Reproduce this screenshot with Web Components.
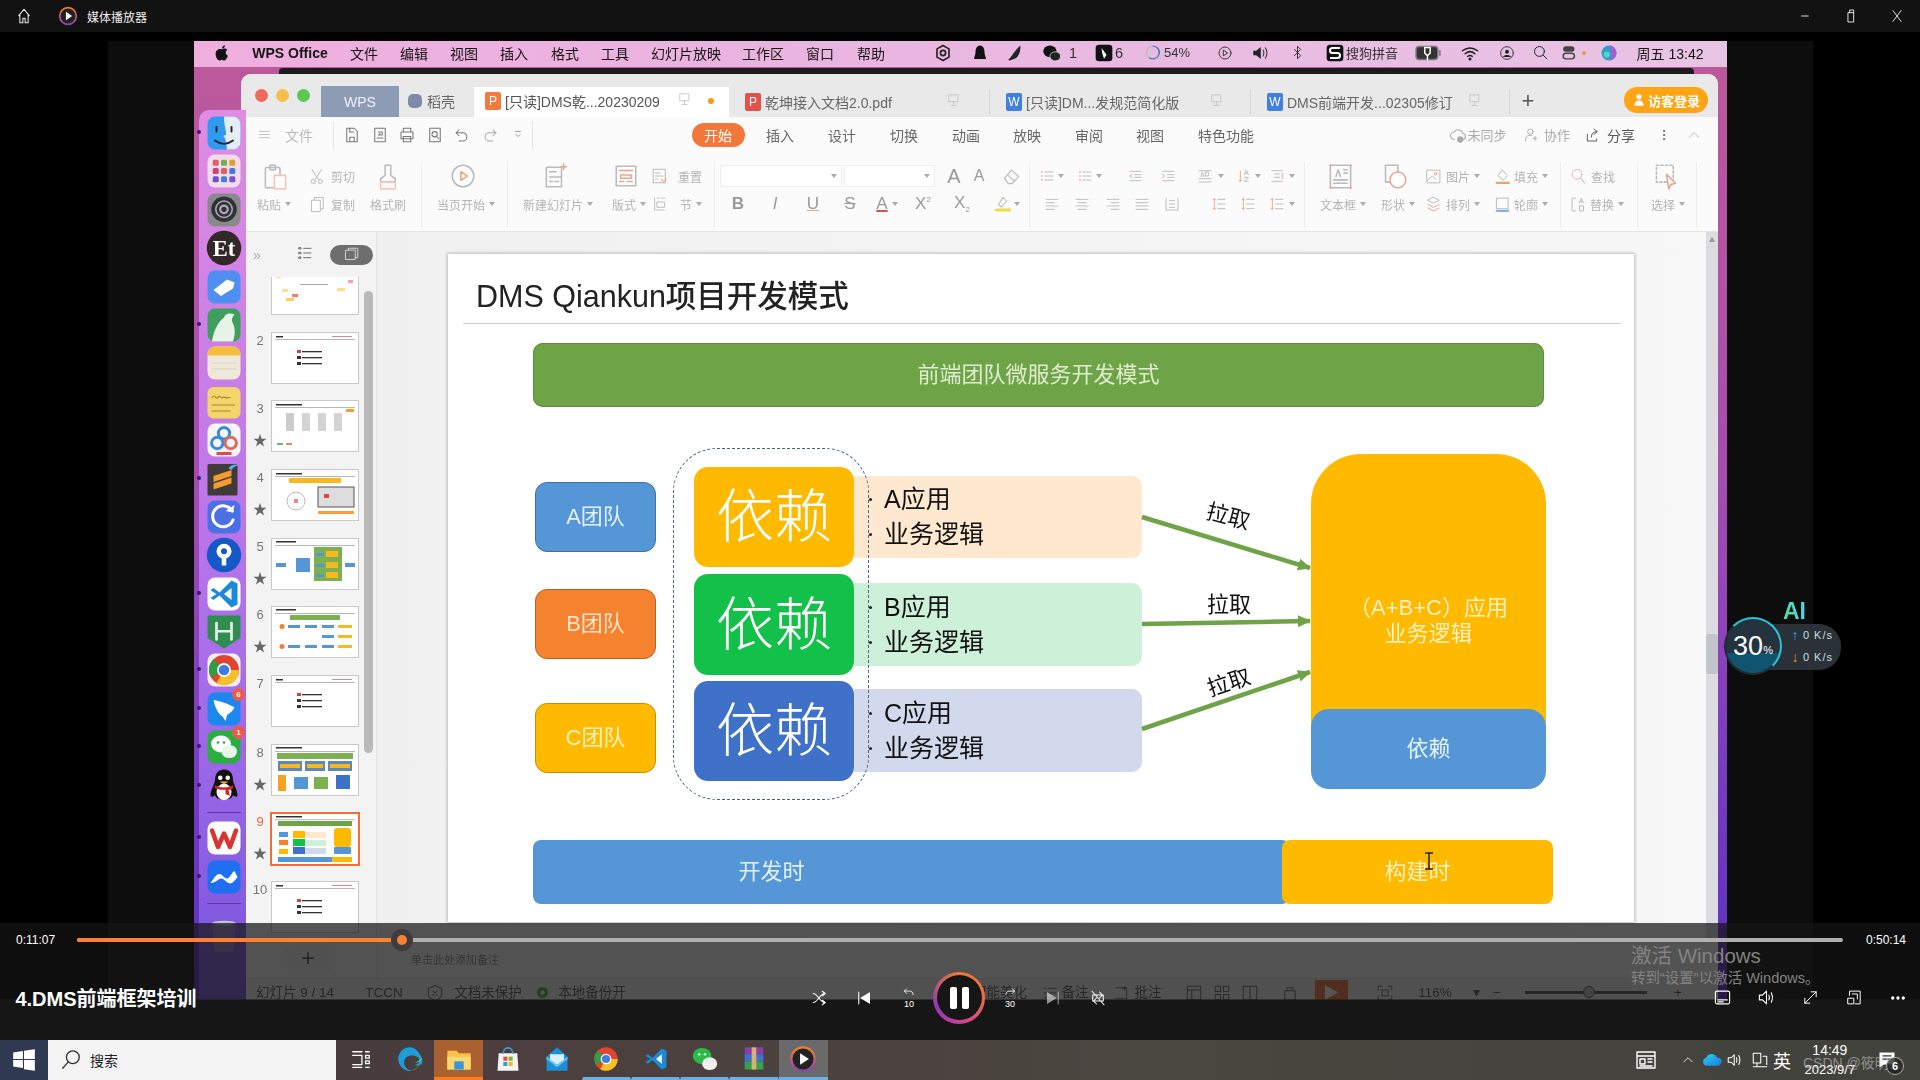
<!DOCTYPE html>
<html lang="zh">
<head>
<meta charset="utf-8">
<title>媒体播放器</title>
<style>
  html, body { margin: 0; background: #000; }
  body { font-family: "Liberation Sans", "Noto Sans CJK SC", sans-serif; }
</style>
</head>
<body>
<media-player>
  <player-titlebar slot="title"></player-titlebar>
  <mac-desktop slot="video"></mac-desktop>
  <speed-widget slot="float"></speed-widget>
  <player-controls slot="controls"></player-controls>
  <win-taskbar slot="taskbar"></win-taskbar>
</media-player>

<script>
const CHROME = '<circle cx="12" cy="12" r="10" fill="#e0452f" stroke="none"/><path d="M12 12 3.400 17A10 10 0 0 1 5 4.800z" fill="#2f9e44" stroke="none"/><path d="M12 12h10a10 10 0 0 1-15 8.700z" fill="#f6c026" stroke="none"/><circle cx="12" cy="12" r="4.600" fill="#fff" stroke="none"/><circle cx="12" cy="12" r="3.500" fill="#3b7de0" stroke="none"/>';
const VSC = '<path d="M17 3 9 11 5 8 3 9.500 7 12l-4 2.500L5 16l4-3 8 8 4-2V5z" fill="#1b8ad8" stroke="none"/><path d="M17 8v8l-5-4z" fill="#fff" stroke="none"/>';
const BUBBLES = '<ellipse cx="10" cy="10" rx="6.600" ry="5.600" fill="#fff" stroke="none"/><ellipse cx="15.500" cy="15" rx="5.200" ry="4.400" fill="#e8f5e8" stroke="none"/><circle cx="8" cy="9" r=".9" fill="#2aae43" stroke="none"/><circle cx="12" cy="9" r=".9" fill="#2aae43" stroke="none"/>';

const ICONS = {
  home: '<path d="M5 11.500 12 3l7 8.500M6.500 10v11h4v-6h3v6h4V10"/>',
  logo: '<defs><linearGradient id="rg" x1="0" y1="0" x2="0" y2="1"><stop offset="0" stop-color="#f08030"/><stop offset="1" stop-color="#9040b8"/></linearGradient></defs><circle cx="12" cy="12" r="10" fill="#222" stroke="url(#rg)" stroke-width="2"/><path d="M9.500 7 17 12l-7.500 5z" fill="#fff" stroke="none"/>',
  min: '<path d="M7 12h10"/>',
  restore: '<path d="M8 7h8v14H8zM10 7V3h6v4"/>',
  close: '<path d="m6 4 12 16M18 4 6 20"/>',
  apple: '<path d="M12 7c2-1.500 5-1.500 7 1-3 2-2.500 6 .8 7.500-1 3-3 6.500-5 6.500-1.500 0-2-1-3-1s-1.500 1-3 1C6 22 3.500 17 3.500 13 3.500 8 8 5.500 12 7zM12 6c0-2.500 2-4.500 4-4.500 0 2.500-2 4.500-4 4.500z" fill="#111" stroke="none"/>',
  gear: '<path d="M12 2 4 6.500v11L12 22l8-4.500v-11z" stroke-width="2.200"/><circle cx="12" cy="12" r="3.500" stroke-width="2.200"/>',
  ghost: '<path d="M12 2c4 0 6 4 6 9 0 4 2 6 2 9H4c0-3 2-5 2-9 0-5 2-9 6-9z" fill="#111" stroke="none"/>',
  leaf: '<path d="M19 2c1 8-2 14-6 17l-8 3-2-1c4-3 6-9 16-19z" fill="#222" stroke="none"/>',
  wx: '<ellipse cx="9.500" cy="10" rx="8" ry="7" fill="#111" stroke="none"/><ellipse cx="16" cy="16" rx="6.500" ry="5.500" fill="#222" stroke="#eee" stroke-width=".8"/>',
  notion: '<rect x="2" y="2" width="20" height="20" rx="4" fill="#111" stroke="none"/><path d="M9 6l6 8-3 5-2-6z" fill="#fff" stroke="none"/>',
  ring: '<path d="M12 3a9 9 0 1 1-5 16" stroke="#4a7fb0" stroke-width="2"/><path d="M7 19A9 9 0 0 1 12 3" stroke="#bbb" stroke-width="2"/>',
  playc: '<circle cx="12" cy="12" r="9"/><path d="m10 8 6 4-6 4z"/>',
  spk: '<path d="M3 9h4l6-5v16l-6-5H3z" fill="#222" stroke="none"/><path d="M16 8c1.500 2 1.500 6 0 8M19 5c3 4 3 10 0 14"/>',
  bt: '<path d="m7 7 10 10-5 5V2l5 5L7 17"/>',
  sogou: '<rect x="2" y="2" width="20" height="20" rx="4" fill="#111" stroke="none"/><path d="M17 6H9a3 3 0 0 0 0 6h6a3 3 0 0 1 0 6H7" stroke="#fff" stroke-width="2.500"/>',
  batt: '<rect x="1" y="6" width="20" height="12" rx="3" fill="#333" stroke="#777"/><path d="M9 7h5v5l-2 2h-1l-2-2zM11.500 14v4" stroke="#fff"/><path d="M23 10v4"/>',
  wifi: '<path d="M2 9c6-5 14-5 20 0M5.500 13c4-3.500 9-3.500 13 0M9 16.500c2-1.500 4-1.500 6 0" stroke-width="2"/><circle cx="12" cy="20" r="1.300" fill="#111"/>',
  user: '<circle cx="12" cy="12" r="9.500"/><circle cx="12" cy="10" r="3" fill="#222" stroke="none"/><path d="M6 18c2-4 10-4 12 0" fill="#222" stroke="none"/>',
  guest: '<circle cx="12" cy="6.500" r="4.500" fill="#fff" stroke="none"/><path d="M4 22c0-12 16-12 16 0z" fill="#fff" stroke="none"/>',
  search: '<circle cx="10.500" cy="10.500" r="7"/><path d="m16 16 5 5"/>',
  ctrl: '<rect x="3" y="3" width="16" height="8" rx="4" fill="#444" stroke="none"/><rect x="3" y="13" width="16" height="8" rx="4" fill="none" stroke="#444" stroke-width="2"/>',
  siri: '<circle cx="12" cy="12" r="10" fill="#2f9fc8" stroke="none"/><path d="M12 2a10 10 0 0 1 0 20c4-3 4-14 0-20z" fill="#a060d0" stroke="none"/><circle cx="9" cy="14" r="4" fill="#50d8c8" stroke="none"/>',

  finder: '<rect x="1" y="1" width="22" height="22" rx="5" fill="#2f9bf0" stroke="none"/><path d="M12 1h6a5 5 0 0 1 5 5v12a5 5 0 0 1-5 5h-4c-.5-5-1-8-2.500-9 1-.5 2-.5 2-1.500C13 9 12 6 12 1z" fill="#e4ecf4" stroke="none"/><path d="M7 8v3M17 8v3M6 17c4 3 8 3 12 0" stroke="#223" stroke-width="1.300" fill="none"/>',
  launch: '<rect x="1" y="1" width="22" height="22" rx="5" fill="#efdcec" stroke="none"/><g fill="#e06060" stroke="none"><rect x="4.500" y="4.500" width="4" height="4" rx="1"/><rect x="15.500" y="4.500" width="4" height="4" rx="1" fill="#e0a030"/><rect x="10" y="4.500" width="4" height="4" rx="1" fill="#70b050"/><rect x="4.500" y="10" width="4" height="4" rx="1" fill="#d04080"/><rect x="10" y="10" width="4" height="4" rx="1"/><rect x="15.500" y="10" width="4" height="4" rx="1" fill="#4080d8"/><rect x="4.500" y="15.500" width="4" height="4" rx="1" fill="#7050c8"/><rect x="10" y="15.500" width="4" height="4" rx="1" fill="#4080d8"/><rect x="15.500" y="15.500" width="4" height="4" rx="1" fill="#8050d0"/></g>',
  settings: '<rect x="1" y="1" width="22" height="22" rx="5" fill="#8a8a8a" stroke="none"/><circle cx="12" cy="11.500" r="8.500" fill="#2f3336" stroke="none"/><circle cx="12" cy="11.500" r="5.500" fill="none" stroke="#aab" stroke-width="1"/><circle cx="12" cy="11.500" r="2.500" fill="none" stroke="#aab" stroke-width="1.500"/>',
  et: '<circle cx="12" cy="12" r="11.500" fill="#32282a" stroke="none"/><text x="12" y="17.500" font-size="15" font-weight="700" text-anchor="middle" fill="#fff" stroke="none" font-family="Liberation Serif">Et</text>',
  pencil: '<rect x="1" y="1" width="22" height="22" rx="5" fill="#4f8ff2" stroke="none"/><path d="m5 14 9-7 5 2-1 4-8 5z" fill="#fff" stroke="none"/>',
  evernote: '<rect x="1" y="1" width="22" height="22" rx="5" fill="#3e9e5c" stroke="none"/><path d="M4 23c1-8 5-14 8-16 1-3 4-3 7-2-2 2-2 4-1 6 2 4 1 9 0 12z" fill="#e7f3e6" stroke="none"/>',
  notes: '<rect x="1" y="1" width="22" height="22" rx="5" fill="#eee8d8" stroke="none"/><path d="M1 7V6a5 5 0 0 1 5-5h12a5 5 0 0 1 5 5v1z" fill="#f5bd3c" stroke="none"/><path d="M4 12h16M4 16h16" stroke="#d8d2c2" stroke-width=".7"/>',
  sticky: '<rect x="1" y="2" width="22" height="21" rx="4" fill="#f3d56c" stroke="none"/><path d="M4 9c2-3 3 2 4 0s2 1 3 0 2 1 5 0M4 14h15M4 18h12" stroke="#a58a30" stroke-width=".8" fill="none"/>',
  baidu: '<rect x="1" y="1" width="22" height="22" rx="5" fill="#f5f5fa" stroke="none"/><circle cx="12" cy="7.500" r="3.800" fill="none" stroke="#3a8ae0" stroke-width="2"/><circle cx="7.500" cy="14" r="3.800" fill="none" stroke="#3a8ae0" stroke-width="2"/><circle cx="16.500" cy="14" r="3.800" fill="none" stroke="#e06a5a" stroke-width="2"/><rect x="7" y="20" width="10" height="2" fill="#e04a4a" stroke="none"/>',
  sublime: '<rect x="1" y="2" width="20" height="21" rx="1" fill="#3e3b38" stroke="none"/><path d="M5 10 17 6v4L5 14zM5 15l12-4v4L5 19z" fill="#f39c2f" stroke="none"/><path d="M15 5c2-3 5-3 7-2-2 0-4 1-5 3z" fill="#5ab0f0" stroke="none"/>',
  qsync: '<rect x="1" y="1" width="22" height="22" rx="5" fill="#4a70e4" stroke="none"/><path d="M18 14a7 7 0 1 1-.5-6" fill="none" stroke="#fff" stroke-width="2"/><path d="m19 4-1 5-5-1z" fill="#fff" stroke="none"/>',
  keyhole: '<circle cx="12" cy="12" r="11.500" fill="#1558c6" stroke="none"/><circle cx="12" cy="9.500" r="5" fill="#fff" stroke="none"/><circle cx="12" cy="9.500" r="2" fill="#1558c6" stroke="none"/><rect x="10.500" y="13" width="3" height="6" fill="#fff" stroke="none"/>',
  vscodeDock: '<rect x="1" y="1" width="22" height="22" rx="5" fill="#fff" stroke="none"/>' + VSC,
  hbuilder: '<path d="M1 1h22v15l-11 7-11-7z" fill="#2f8d52" stroke="none"/><path d="M7 6v11M17 6v11M7 11.500h10" stroke="#e8f4e8" stroke-width="1.800"/>',
  chromeDock: '<rect x="1" y="1" width="22" height="22" rx="5" fill="#f2eef2" stroke="none"/>' + CHROME,
  ding: '<rect x="1" y="1" width="22" height="22" rx="5" fill="#1e87ee" stroke="none"/><path d="M5 6c5 1 9 2 14 5-1 2-3 4-5 5l-1 4-2-3c-3-2-5-6-6-11z" fill="#fff" stroke="none"/>',
  wechatDock: '<rect x="1" y="1" width="22" height="22" rx="5" fill="#2aae43" stroke="none"/>' + BUBBLES,
  qq: '<path d="M12 1c4 0 6 3 6 7 0 2 3 7 3 10 0 2-2 1-3 0-.5 2-2 3-6 3s-5.500-1-6-3c-1 1-3 2-3 0 0-3 3-8 3-10 0-4 2-7 6-7z" fill="#111" stroke="none"/><ellipse cx="12" cy="16" rx="5" ry="5.500" fill="#fff" stroke="none"/><circle cx="9.500" cy="6.500" r="1.500" fill="#fff" stroke="none"/><circle cx="14.500" cy="6.500" r="1.500" fill="#fff" stroke="none"/><path d="M9 9h6l-3 2z" fill="#f2b01e" stroke="none"/><path d="M6 11.500c4 2 8 2 12 0v2c-1 1-2 1-3 1l1 4-3-1v-3c-3 0-6 0-7-1z" fill="#d8231f" stroke="none"/>',
  wpsDock: '<rect x="1" y="1" width="22" height="22" rx="5" fill="#fff" stroke="none"/><path d="m4 7 4 11 4-9 4 9 4-11" fill="none" stroke="#d9342f" stroke-width="3" stroke-linejoin="round"/>',
  lark: '<rect x="1" y="1" width="22" height="22" rx="5" fill="#1f6ff0" stroke="none"/><path d="M3 16c3-4 4-6 6-6s3 3 5 3 3-4 5-5l2 4c-2 3-4 5-6 4s-3-3-5-3-3 3-7 3z" fill="#fff" stroke="none"/>',
  trash: '<path d="M4 4h16l-2 19H6z" fill="#9c94b8" opacity=".7" stroke="none"/><ellipse cx="12" cy="4" rx="8" ry="1.500" fill="#c8c2dc" stroke="none"/>',

  menu3: '<path d="M4 7h16M4 12h16M4 17h16"/>',
  save: '<path d="M5 3h10l4 4v14H5zM9 21v-6h6v6M9 3v5h5"/>',
  saveas: '<path d="M5 3h14v18H5zM10 8h5v4h-5l2-2M8 16h8"/>',
  print: '<path d="M7 8V3h10v5M4 8h16v9H4zM7 14h10v7H7z"/>',
  preview: '<path d="M5 3h14v18H5z"/><circle cx="11.500" cy="11" r="3.500"/><path d="m14 14 3 3"/>',
  undo: '<path d="M8 5 4 9l4 4M4 9h9a5 5 0 0 1 0 11H8"/>',
  redo: '<path d="m16 5 4 4-4 4M20 9h-9a5 5 0 0 0 0 11h5"/>',
  qa: '<path d="M7 5h10M8 11l4 4 4-4"/>',
  sync: '<path d="M7 18a5 5 0 0 1 0-10 6 6 0 0 1 11 2 4 4 0 0 1 0 8"/><circle cx="15" cy="18" r="3.500" fill="#aaa"/>',
  collab: '<circle cx="11" cy="7" r="4"/><path d="M4 21v-3a6 6 0 0 1 9-5M18 14v6M15 17h6"/>',
  share: '<path d="M5 11v10h14v-3M11 15c0-5 3-8 8-8M15 3l5 4-5 4"/>',
  dots: '<circle cx="12" cy="5" r="1.200" fill="#888"/><circle cx="12" cy="12" r="1.200" fill="#888"/><circle cx="12" cy="19" r="1.200" fill="#888"/>',
  up: '<path d="m4 16 8-8 8 8"/>',
  mon: '<path d="M5 3h14v11H5zM12 14v5M8 20h8"/>',
  paste: '<rect x="3" y="4" width="13" height="18" rx="1"/><rect x="7" y="2" width="5" height="4"/><rect x="11" y="11" width="10" height="12" stroke="#f3c7b4" fill="#fff"/>',
  cut: '<circle cx="6" cy="19" r="3"/><circle cx="16" cy="19" r="3"/><path d="M8 17 18 2M14 17 4 2"/>',
  copy: '<rect x="8" y="2" width="12" height="16"/><rect x="4" y="6" width="12" height="16" fill="#fff"/>',
  brush: '<path d="M9 2h5v9l4 3v3H5v-3l4-3z"/><path d="M5 17h13v6H5z" stroke="#f3c7b4"/>',
  newslide: '<path d="M4 4h14v18H4zM7 8h6M7 13h10M7 17h3M12 17h3"/><path d="M20 1v5M17.500 3.500h5" stroke="#e8a690"/>',
  layout: '<rect x="3" y="3" width="18" height="18"/><path d="M6 7h12M7 11h10v3H7z" stroke="#e8a690"/><path d="M6 17h4M13 17h5"/>',
  reset: '<rect x="3" y="3" width="16" height="18"/><path d="M6 8h6M6 12h10M6 16h3"/><path d="M14 16a3 3 0 1 0 6 0" stroke="#e8a690"/>',
  section: '<path d="M4 3v18h14M8 3h3M14 3h5M8 9h11v8H8z"/>',
  eraser: '<path d="m3 14 9-10 9 8-8 9H8z"/><path d="m7 10 9 8"/>',
  hl: '<path d="m12 3 5 5-7 8-4-3z"/><path d="M3 20h18" stroke="#e8de50" stroke-width="4"/>',
  bullets: '<path d="M9 6h12M9 12h12M9 18h12"/><path d="M4 6h1M4 12h1M4 18h1" stroke="#e8a690" stroke-width="2"/>',
  indL: '<path d="M4 5h17M11 10h10M11 14h10M4 19h17"/><path d="m8 9-4 3 4 3" stroke="#e8a690"/>',
  indR: '<path d="M4 5h17M11 10h10M11 14h10M4 19h17"/><path d="m3 9 4 3-4 3" stroke="#e8a690"/>',
  ab: '<path d="M3 4h18M3 21h18M3 16h18"/><path d="M6 13l2-7 2 7M13 6h4v6h-4z"/>',
  sort: '<path d="M5 4v16l-2-2M5 20l2-2" stroke="#e8a690"/><path d="m11 10 3-7 3 7M12 8h4M11 14h6l-6 6h6"/>',
  space: '<path d="M4 4h16M4 20h16M8 9h8M8 14h8"/><path d="M20 8v8" stroke="#e8a690"/>',
  alignL: '<path d="M3 5h18M3 10h12M3 15h18M3 20h12"/>',
  alignC: '<path d="M3 5h18M6 10h12M3 15h18M6 20h12"/>',
  alignR: '<path d="M3 5h18M9 10h12M3 15h18M9 20h12"/>',
  alignJ: '<path d="M3 5h18M3 10h18M3 15h18M3 20h18"/>',
  distr: '<path d="M3 3v18h18V3M8 7h8M8 12h8M8 17h8"/>',
  lineUp: '<path d="M10 5h11M10 12h11M10 19h11"/><path d="M5 4v16M3 6l2-2 2 2M3 18l2 2 2-2" stroke="#e8a690"/>',
  textbox: '<rect x="3" y="2" width="18" height="20"/><path d="M8 12l2-6 2 6M6 15h12M6 18h12M15 6h3M15 9h3"/><g stroke="#e8a690" stroke-width="2"><path d="M3 2h.1M21 2h.1M3 22h.1M21 22h.1"/></g>',
  shape: '<path d="M4 2h11v15H4z"/><circle cx="15" cy="15" r="7" stroke="#e8a690" fill="#fff"/>',
  pic: '<rect x="3" y="3" width="18" height="18"/><path d="m3 18 7-7 5 5"/><circle cx="15" cy="8" r="2" stroke="#e8a690"/>',
  fill: '<path d="m12 3 7 8-6 6-7-6z"/><path d="M4 21h17" stroke="#f0a060" stroke-width="3"/>',
  arrange: '<path d="m12 2 8 4-8 4-8-4z"/><path d="m4 12 8 4 8-4M4 17l8 4 8-4" stroke="#e8a690"/>',
  outline: '<rect x="4" y="3" width="16" height="15"/><path d="M4 21h16" stroke="#8ab0e0" stroke-width="3"/>',
  find: '<circle cx="10" cy="9" r="7" stroke="#e8b8a8"/><path d="m15 14 6 8"/>',
  replace: '<path d="M8 3H3v18h5M13 10l3-7 3 7M14 8h4M14 14h5v7h-5z"/>',
  selectA: '<rect x="3" y="2" width="15" height="15" stroke-dasharray="2 2"/><path d="m12 10 8 8-4 1-2 4z" stroke="#e8a690" fill="#fff"/>',
  playBig: '<circle cx="12" cy="12" r="10"/><path d="m10 8 6 4-6 4z" stroke="#e8a690"/>',
  listview: '<path d="M10 5h11M10 12h11M10 19h11"/><rect x="3" y="4" width="3" height="2"/><rect x="3" y="11" width="3" height="2"/><rect x="3" y="18" width="3" height="2"/>',
  slideview: '<rect x="3" y="5" width="15" height="15" fill="#6e6e6e"/><path d="M7 5V2h15v15h-4"/>',
  shield: '<path d="M12 2 21 6v8c0 4-4 6-9 8-5-2-9-4-9-8V6z"/><path d="m9 9 6 6M15 9l-6 6"/>',
  backup: '<circle cx="12" cy="12" r="9" fill="#57a64f" stroke="none"/><circle cx="12" cy="12" r="3.500" fill="#eef" stroke="none"/>',
  view1: '<path d="M3 3h18v18H3zM3 8h18M9 8v13"/>',
  view2: '<path d="M3 3h7v7H3zM14 3h7v7h-7zM3 14h7v7H3zM14 14h7v7h-7z"/>',
  view3: '<path d="M3 3h18v18H3zM12 3v18"/>',
  focus: '<path d="M3 8V3h5M21 8V3h-5M3 16v5h5M21 16v5h-5"/><rect x="8" y="8" width="8" height="8"/>',
  lock: '<rect x="5" y="9" width="14" height="12"/><path d="M8 9V5h8v4"/>',
  note: '<path d="M3 5h4M3 12h4M3 19h4M10 5h11M10 12h11M10 19h11"/>',
  comment: '<path d="M3 4h16v16H3M16 2v6M13 5h6"/>',

  shuffle: '<path d="M3 6c6 0 9 12 15 12M3 18c6 0 9-12 15-12M15 3l4 3-4 3M15 15l4 3-4 3"/>',
  prev: '<path d="M5 4v16"/><path d="M20 4v16L7 12z" fill="#fff" stroke="none"/>',
  next: '<path d="M19 4v16"/><path d="M4 4v16l13-8z" fill="#fff" stroke="none"/>',
  back: '<path d="M8 3 4 7l4 4M4 7h8c5 0 7 2 7 6"/>',
  fwd: '<path d="m16 3 4 4-4 4M20 7h-8c-5 0-7 2-7 6"/>',
  repeat: '<path d="M5 16V8h12M14 4l4 4-4 4M19 8v8H7M10 20l-4-4 4-4M4 3l16 18"/>',
  subtitle: '<rect x="3" y="4" width="18" height="16" rx="2"/><path d="M6 15h12M6 17.500h7"/>',
  volume: '<path d="M3 9h4l5-5v16l-5-5H3z"/><path d="M15 9c1 2 1 4 0 6M18 6c2 4 2 8 0 12"/>',
  full: '<path d="M4 20 20 4M13 4h7v7M11 20H4v-7"/>',
  pip: '<path d="M5 9V3h15v18H13M3 13h8v8H3zM9 7h7v7"/>',
  more: '<circle cx="5" cy="12" r="1.500" fill="#fff"/><circle cx="12" cy="12" r="1.500" fill="#fff"/><circle cx="19" cy="12" r="1.500" fill="#fff"/>',

  win: '<path d="m2 5 9-1.300V11H2zM12 3.500 22 2v9H12zM2 12h9v7.300L2 18zM12 12h10v10l-10-1.500z" fill="#fff" stroke="none"/>',
  tasksearch: '<circle cx="14" cy="9" r="7"/><path d="m9 14-6 7"/>',
  taskview: '<path d="M3 3h10M3 20h10M3 7h10v10H3M17 3h4M17 7h4v3h-4zM17 13h4v3h-4zM17 20h4"/>',
  edge: '<path d="M12 2a10 10 0 0 0-8 16c2 3 6 5 9 4-4-1-6-4-6-7 0-4 3-6 7-6s6 2 6 5c0 1-1 3-4 3 1 1 4 1 6-1 1-1 1-3 0-5-2-5-6-9-10-9z" fill="#1a9fd8" stroke="none"/><path d="M21 14c-1 4-5 8-9 8 3 0 7-1 9-8z" fill="#3fc060" stroke="none"/><path d="M16 15c3 .5 6-1 6-5-1 3-3 4-6 5z" fill="#50d070" stroke="none"/>',
  folder: '<path d="M2 5h8l2 2h10v14H2z" fill="#f8c24a" stroke="none"/><path d="M2 10h20v11H2z" fill="#fbd774" stroke="none"/><rect x="8" y="14" width="8" height="7" fill="#3a96d8" stroke="none"/>',
  store: '<path d="M4 7h16l1 15H3z" fill="#f4f4f4" stroke="none"/><path d="M8 7c0-6 8-6 8 0" stroke="#3a9fe0" fill="none"/><rect x="8" y="10" width="3.500" height="3.500" fill="#e8503a" stroke="none"/><rect x="12.500" y="10" width="3.500" height="3.500" fill="#7ab830" stroke="none"/><rect x="8" y="14.500" width="3.500" height="3.500" fill="#2a9fe8" stroke="none"/><rect x="12.500" y="14.500" width="3.500" height="3.500" fill="#f4b820" stroke="none"/>',
  mail: '<path d="M3 10 12 2l9 8v12H3z" fill="#1a8fd8" stroke="none"/><path d="M6 8h12v5l-6 4-6-4z" fill="#d8f0fc" stroke="none"/><path d="M3 10l9 7 9-7v2l-9 7-9-7z" fill="#6cc4f0" stroke="none"/>',
  chrome: CHROME,
  vscode: VSC,
  wechat: '<ellipse cx="9.500" cy="9.500" rx="8" ry="7" fill="#2db84a" stroke="none"/><ellipse cx="16" cy="16" rx="6.500" ry="5.500" fill="#efefef" stroke="none"/><circle cx="7" cy="8" r="1" fill="#fff" stroke="none"/><circle cx="12" cy="8" r="1" fill="#fff" stroke="none"/>',
  rar: '<rect x="4" y="2" width="16" height="6" fill="#8a3fa8" stroke="none"/><rect x="4" y="8" width="16" height="6" fill="#3f6fd0" stroke="none"/><rect x="4" y="14" width="16" height="7" fill="#3a9f4f" stroke="none"/><rect x="10" y="2" width="4" height="19" fill="#d8b070" stroke="none"/>',
  news: '<path d="M3 4h18v16H3zM3 8h18M6 11h5v5H6zM14 11h4M14 14h4M6 18h12"/>',
  caret: '<path d="m5 15 7-7 7 7"/>',
  cloud: '<defs><linearGradient id="cg" x1="0" y1="0" x2="1" y2="1"><stop offset="0" stop-color="#2ad0e8"/><stop offset="1" stop-color="#1a78e8"/></linearGradient></defs><path d="M6 19a5 5 0 0 1-1-9.800A7 7 0 0 1 18 9a5 5 0 0 1 1 10z" fill="url(#cg)" stroke="none"/>',
  speaker: '<path d="M3 9h4l4-4v14l-4-4H3z"/><path d="M14 9c1 2 1 4 0 6M17 6c2 4 2 8 0 12"/>',
  net: '<path d="M3 3h10v13H3zM8 16v5M3 21h10M16 7h5v11M13 21h8"/>',
  notify: '<path d="M3 3h18v14H9l-6 4z" fill="#fff" stroke="none"/><path d="M7 7h10M7 11h10" stroke="#333"/>'
};

class UiIcon extends HTMLElement {
  connectedCallback() {
    const s = this.getAttribute('size') || 16;
    const root = this.attachShadow({ mode: 'open' });
    root.innerHTML = `<style>:host{display:inline-flex;flex:none}svg{display:block}</style>
      <svg viewBox="0 0 24 24" width="${s}" height="${s}" fill="none" stroke="currentColor" stroke-width="1.4" stroke-linecap="round" stroke-linejoin="round">${ICONS[this.getAttribute('name')] || ''}</svg>`;
  }
}
customElements.define('ui-icon', UiIcon);

const ic = (name, size = 16, style = '') => `<ui-icon name="${name}" size="${size}" style="${style}"></ui-icon>`;
const caret = '<i class="car"></i>';

// row of fixed cells placed by centre x; still flex flow, margins come from the list
function row(start, items) {
  let x = start;
  return items.map(([cx, w, html]) => {
    const left = cx - w / 2;
    const m = left - x;
    x = left + w;
    return `<span class="c" style="width:${w}px;margin-left:${m}px">${html}</span>`;
  }).join('');
}
const ROW_CSS = `
  .row{display:flex;align-items:center;white-space:nowrap}
  .c{flex:none;display:flex;align-items:center;justify-content:center}
  .car{display:inline-block;border:3px solid transparent;border-top:4px solid #aaa;border-bottom:0;margin-left:4px}
`;

class MediaPlayer extends HTMLElement {
  constructor() {
    super();
    this.attachShadow({ mode: 'open' }).innerHTML = `
    <style>
      :host{display:grid;grid-template-rows:32px 1fr 40px;width:1920px;height:1080px;overflow:hidden;background:#000;color:#fff}
      .stage{position:relative;overflow:hidden;background:#000;padding:9px 108px 0;display:flex}
      .frame{flex:1;background:#0d0d0d;padding:0 86px;height:959px;box-sizing:border-box}
    </style>
    <slot name="title"></slot>
    <div class="stage">
      <div class="frame"><slot name="video"></slot></div>
      <slot name="float"></slot>
      <slot name="controls"></slot>
    </div>
    <slot name="taskbar"></slot>`;
  }
}

class PlayerTitlebar extends HTMLElement {
  constructor() {
    super();
    this.attachShadow({ mode: 'open' }).innerHTML = `
    <style>
      :host{display:flex;align-items:center;background:#121212;color:#eee;font-size:12px}
      ${ROW_CSS}
      .row{width:100%;height:100%}
    </style>
    <div class="row">${row(0, [
      [24, 18, ic('home', 18)],
      [68, 20, ic('logo', 20)],
      [117, 62, '媒体播放器'],
      [1805, 16, ic('min', 16)],
      [1851, 16, ic('restore', 16)],
      [1897, 16, ic('close', 16)]
    ])}</div>`;
  }
}

class MacDesktop extends HTMLElement {
  constructor() {
    super();
    this.attachShadow({ mode: 'open' }).innerHTML = `
    <style>
      :host{display:block;position:relative;height:959px;overflow:hidden;filter:blur(.45px);
        background:linear-gradient(180deg,#bd5a9a 0,#a64cb0 45%,#7a3cc0 75%,#5a2fc0 100%)}
      .win{padding:0 9px 0 47px}
      .back{height:6px;margin:1px 33px 0 85px;background:#1c1c1c;border-radius:4px 4px 0 0}
    </style>
    <mac-menubar></mac-menubar>
    <div class="back"></div>
    <div class="win"><wps-window></wps-window></div>
    <mac-dock></mac-dock>`;
  }
}

class MacMenubar extends HTMLElement {
  constructor() {
    super();
    const t = (cx, s, w) => [cx, w || s.length * 15, s];
    this.attachShadow({ mode: 'open' }).innerHTML = `
    <style>
      :host{display:block;height:26px;padding-bottom:3px;box-sizing:border-box;background:linear-gradient(90deg,#efaede 0,#eab4e0 40%,#e8c4e4 100%);color:#151515;font-size:14px}
      ${ROW_CSS}
      .row{height:100%}
      b{font-size:14px}
      small{font-size:13px;color:#333}
      .n{font-size:14.500px}
      .o{width:4px;height:4px;border-radius:50%;background:#e8a040}
    </style>
    <div class="row">${row(194, [
      [222, 18, ic('apple', 18)],
      [290, 78, '<b>WPS Office</b>'],
      t(364, '文件'), t(414, '编辑'), t(464, '视图'), t(514, '插入'), t(565, '格式'), t(615, '工具'),
      t(686, '幻灯片放映'), t(763, '工作区'), t(820, '窗口'), t(871, '帮助'),
      [943, 18, ic('gear', 18, 'color:#222')],
      [980, 18, ic('ghost', 18)],
      [1015, 18, ic('leaf', 18)],
      [1052, 20, ic('wx', 20)],
      [1073, 10, '<small class="n">1</small>'],
      [1104, 20, ic('notion', 20)],
      [1119, 10, '<small class="n">6</small>'],
      [1152, 17, ic('ring', 17)],
      [1177, 30, '<small>54%</small>'],
      [1225, 16, ic('playc', 16, 'color:#333')],
      [1260, 18, ic('spk', 18, 'color:#333')],
      [1297, 15, ic('bt', 15, 'color:#222')],
      [1335, 20, ic('sogou', 20)],
      [1372, 52, '<small>搜狗拼音</small>'],
      [1428, 26, ic('batt', 26, 'color:#777')],
      [1470, 18, ic('wifi', 18, 'color:#222')],
      [1507, 16, ic('user', 16, 'color:#333')],
      [1540, 17, ic('search', 17, 'color:#222')],
      [1569, 17, ic('ctrl', 17)],
      [1584, 4, '<i class="o"></i>'],
      [1609, 18, ic('siri', 18)],
      [1670, 80, '周五 13:42']
    ])}</div>`;
  }
}

class MacDock extends HTMLElement {
  constructor() {
    super();
    const names = [
      ['finder', 1], ['launch'], ['settings'], ['et'], ['pencil'], ['evernote', 1], ['notes'], ['sticky'],
      ['baidu'], ['sublime', 1], ['qsync'], ['keyhole'], ['vscodeDock', 1], ['hbuilder'], ['chromeDock', 1],
      ['ding', 1, '6'], ['wechatDock', 1, '1'], ['qq', 1], '-', ['wpsDock', 1], ['lark', 1], '-', ['trash']
    ];
    const cells = names.map(n => n === '-' ? '<hr>' :
      `<div class="it">${n[1] ? '<i class="dot"></i>' : ''}${ic(n[0], 36)}${n[2] ? `<b>${n[2]}</b>` : ''}</div>`).join('');
    this.attachShadow({ mode: 'open' }).innerHTML = `
    <style>
      :host{position:absolute;left:5px;top:69px;width:47px;height:900px;border-radius:10px 0 0 0;
        background:linear-gradient(180deg,#e08ce2 0,#c47be8 35%,#a56cea 65%,#7454dc 100%);
        display:flex;flex-direction:column;align-items:center;padding:5px 0 0 3px;box-sizing:border-box;gap:2.400px}
      .it{position:relative;height:36px;flex:none;display:flex}
      .dot{position:absolute;left:-9px;top:15px;width:4px;height:4px;border-radius:50%;background:#3a1a70}
      b{position:absolute;right:-3px;top:-3px;width:13px;height:13px;border-radius:50%;background:#ee5a4a;color:#fff;
        font:700 8px/13px "Liberation Sans",sans-serif;text-align:center}
      hr{width:34px;margin:6px 0 5px;border:0;border-top:1px solid #5a3aa0;flex:none}
      hr:nth-last-child(2){margin-bottom:10px}
    </style>${cells}`;
  }
}

class WpsWindow extends HTMLElement {
  constructor() {
    super();
    this.attachShadow({ mode: 'open' }).innerHTML = `
    <style>
      :host{display:block;width:1477px;border-radius:10px 10px 0 0;overflow:hidden;background:#f5f5f5;height:930px}
      .body{display:grid;grid-template-columns:136px 1fr;grid-template-rows:709px 37px 28px}
      wps-thumbs{grid-row:1 / span 2}
      .notes{background:#f5f5f5;font-size:11px;color:#888;padding:9px 0 0 34px;border-top:1px solid #ddd;box-sizing:border-box}
      wps-status{grid-column:1 / span 2}
    </style>
    <wps-tabs></wps-tabs>
    <wps-menu></wps-menu>
    <wps-ribbon></wps-ribbon>
    <div class="body">
      <wps-thumbs></wps-thumbs>
      <slide-canvas></slide-canvas>
      <div class="notes">单击此处添加备注</div>
      <wps-status></wps-status>
    </div>`;
  }
}

class WpsTabs extends HTMLElement {
  constructor() {
    super();
    const doc = (c, l) => `<span class="doc" style="background:${c}">${l}</span>`;
    this.attachShadow({ mode: 'open' }).innerHTML = `
    <style>
      :host{display:flex;height:43px;background:#e9e9e9;align-items:flex-end;font-size:14px;color:#666;white-space:nowrap}
      .lights{width:80px;height:43px;display:flex;align-items:center;gap:8px;padding-left:14px;box-sizing:border-box;margin-top:-2px}
      .lights i{width:13px;height:13px;border-radius:50%}
      .t{height:30px;display:flex;align-items:center;box-sizing:border-box;flex:none;position:relative;padding-bottom:3px}
      .wps{width:78px;justify-content:center;background:#8e9bb5;color:#eef;height:31px;padding-bottom:0}
      .dao{width:75px;padding-left:9px;gap:5px}
      .dao u{width:14px;height:14px;border-radius:5px;background:#7f8aa8;text-decoration:none}
      .act{width:255px;background:#fff;padding-left:11px;color:#555}
      .n{width:261px;padding-left:16px;border-right:1px solid #d6d6d6;height:26px;margin-bottom:2px;padding-bottom:1px}
      .doc{width:16px;height:18px;border-radius:2px;color:#fff;font-size:12px;text-align:center;line-height:18px;flex:none;margin-right:4px}
      ui-icon{color:#c4c4c4}
      .end{position:absolute;right:0}
      .dot{width:6px;height:6px;border-radius:50%;background:#f0a010;margin-left:16px}
      .plus{width:36px;text-align:center;font-size:22px;color:#555;line-height:26px;margin-bottom:3px}
      .guest{margin-left:auto;margin-right:10px;margin-bottom:4px;width:84px;height:26px;border-radius:13px;background:#ffa514;color:#fff;font-size:13px;font-weight:700;display:flex;align-items:center;justify-content:center;gap:2px}
    </style>
    <div class="lights"><i style="background:#ed6a5e"></i><i style="background:#f4bf4f"></i><i style="background:#61c554"></i></div>
    <div class="t wps">WPS</div>
    <div class="t dao"><u></u>稻壳</div>
    <div class="t act">${doc('#f27a3e', 'P')}[只读]DMS乾...20230209<span style="margin-left:17px">${ic('mon', 15)}</span><i class="dot"></i></div>
    <div class="t n">${doc('#e4514a', 'P')}乾坤接入文档2.0.pdf<span class="end" style="right:28px">${ic('mon', 15)}</span></div>
    <div class="t n" style="padding-left:16px">${doc('#3f80e0', 'W')}[只读]DM...发规范简化版<span class="end" style="right:26px">${ic('mon', 15)}</span></div>
    <div class="t n" style="width:259px;padding-left:16px">${doc('#3f80e0', 'W')}DMS前端开发...02305修订<span class="end" style="right:27px">${ic('mon', 15)}</span></div>
    <div class="plus">+</div>
    <div class="guest">${ic('guest', 14)}访客登录</div>`;
  }
}

class WpsMenu extends HTMLElement {
  constructor() {
    super();
    const m = (cx, s, w) => [cx, w || 32, s];
    const g = 'color:#777';
    this.attachShadow({ mode: 'open' }).innerHTML = `
    <style>
      :host{display:block;height:37px;background:#fbfbfb;font-size:14px;color:#666;padding-bottom:2px;box-sizing:border-box}
      ${ROW_CSS}
      .row{height:100%}
      .sep{width:1px;height:28px;background:#e5e5e5}
      .pill{width:53px;height:24px;border-radius:12px;background:#f4773a;color:#fff;display:flex;align-items:center;justify-content:center}
      .lt{color:#bbb}
      .gr{color:#aaa;font-size:13px}
    </style>
    <div class="row">${row(241, [
      [264, 16, ic('menu3', 15, 'color:#bbb')],
      [299, 32, '<span class="lt">文件</span>'],
      [333, 1, '<i class="sep"></i>'],
      [352, 18, ic('save', 18, g)], [380, 18, ic('saveas', 18, g)], [407, 18, ic('print', 18, g)],
      [435, 18, ic('preview', 18, g)], [462, 18, ic('undo', 18, g)], [490, 18, ic('redo', 18, 'color:#aaa')],
      [518, 12, ic('qa', 12, g)],
      [532, 1, '<i class="sep"></i>'],
      [718, 53, '<span class="pill">开始</span>'],
      m(780, '插入'), m(842, '设计'), m(904, '切换'), m(966, '动画'), m(1027, '放映'), m(1089, '审阅'), m(1150, '视图'),
      m(1226, '特色功能', 60),
      [1458, 18, ic('sync', 18, 'color:#aaa')],
      [1487, 40, '<span class="gr">未同步</span>'],
      [1531, 16, ic('collab', 16, 'color:#aaa')],
      [1557, 28, '<span class="gr">协作</span>'],
      [1592, 16, ic('share', 16, 'color:#555')],
      [1621, 30, '<span style="color:#555">分享</span>'],
      [1664, 14, ic('dots', 14)],
      [1694, 14, ic('up', 14, 'color:#aaa')]
    ])}</div>`;
  }
}

class WpsRibbon extends HTMLElement {
  constructor() {
    super();
    const sep = x => [x, 1, '<i class="sep"></i>'];
    const b = (cx, name, size = 16) => [cx, size, ic(name, size)];
    const tx = (cx, s, w) => [cx, w || s.length * 13, s];
    const tc = (cx, s) => [cx, s.length * 12 + 10, s + caret];
    const dn = cx => [cx, 6, '<i class="car" style="margin:0"></i>'];
    const sel = (cx, w) => [cx, w, `<span class="sel" style="width:${w}px">${caret}</span>`];
    const l = (cx, s, extra = '') => [cx, 18, `<span class="L" style="${extra}">${s}</span>`];
    this.attachShadow({ mode: 'open' }).innerHTML = `
    <style>
      :host{display:block;height:78px;background:#fbfbfb;border-bottom:1px solid #e4e4e4;box-sizing:border-box;padding-top:8px;font-size:12px;color:#b4b4b4}
      ${ROW_CSS}
      .row{height:28px}
      .sep{display:block;width:1px;height:66px;background:#ececec;margin-top:38px}
      .sel{height:22px;background:#fff;border:1px solid #efefef;box-sizing:border-box;display:flex;align-items:center;justify-content:flex-end;padding-right:4px}
      .L{font:400 17px "Liberation Sans",sans-serif;color:#9a9a9a}
      ui-icon{color:#bbb}
    </style>
    <div class="row">${row(241, [
      b(275, 'paste', 27), b(317, 'cut', 17), tx(343, '剪切'), b(388, 'brush', 27),
      sep(421), b(463, 'playBig', 26), sep(507),
      b(555, 'newslide', 26), b(626, 'layout', 26), b(660, 'reset', 18), tx(690, '重置'),
      sep(714), sel(781, 122), sel(889, 91),
      l(954, 'A', 'font-size:20px'), l(979, 'A', 'font-size:16px'), b(1011, 'eraser', 19), sep(1029),
      b(1047, 'bullets'), dn(1061), b(1085, 'bullets'), dn(1099), b(1135, 'indL'), b(1168, 'indR'),
      b(1205, 'ab'), dn(1221), b(1245, 'sort'), dn(1258), b(1277, 'space'), dn(1292),
      sep(1304), b(1340, 'textbox', 27), b(1394, 'shape', 27),
      b(1433, 'pic', 17), tc(1463, '图片'), b(1502, 'fill', 17), tc(1531, '填充'),
      sep(1560), b(1578, 'find', 17), tx(1603, '查找'), sep(1637), b(1666, 'selectA', 27), sep(1696)
    ])}</div>
    <div class="row">${row(241, [
      tc(274, '粘贴'), b(317, 'copy', 17), tx(343, '复制'), tx(388, '格式刷', 40),
      tc(466, '当页开始'), tc(558, '新建幻灯片'), tc(629, '版式'), b(660, 'section'), tc(691, '节'),
      l(738, 'B', 'font-weight:700'), l(775, 'I', 'font-style:italic'), l(813, 'U', 'text-decoration:underline #e8a690'),
      l(850, 'S', 'text-decoration:line-through'), l(882, 'A', 'text-decoration:underline #e05050 2px;color:#999'), dn(895),
      l(923, 'X<sup style="font-size:8px">2</sup>'), l(962, 'X<sub style="font-size:8px">2</sub>'), b(1003, 'hl', 18), dn(1017),
      b(1052, 'alignL'), b(1082, 'alignC'), b(1113, 'alignR'), b(1142, 'alignJ'), b(1172, 'distr'),
      b(1219, 'lineUp'), b(1248, 'lineUp'), b(1277, 'lineUp'), dn(1292),
      tc(1343, '文本框'), tc(1398, '形状'), b(1433, 'arrange', 17), tc(1463, '排列'), b(1502, 'outline', 17), tc(1531, '轮廓'),
      b(1578, 'replace', 17), tc(1607, '替换'), tc(1668, '选择')
    ])}</div>`;
  }
}

const THUMB_ART = {
  list: `<rect x="4" y="3" width="7" height="1.500" fill="#333"/><rect x="60" y="3" width="20" height="1" fill="#d88"/><rect x="3" y="6" width="80" height=".6" fill="#888"/>
    <g fill="#333"><rect x="25" y="17" width="4" height="3" fill="#c44"/><rect x="30" y="18" width="20" height="1.300"/><rect x="25" y="23" width="4" height="3"/><rect x="30" y="24" width="20" height="1.300"/><rect x="25" y="29" width="4" height="3"/><rect x="30" y="30" width="20" height="1.300"/></g>`,
  cover: `<rect x="16" y="0" width="54" height="1.500" fill="#bbb"/><g><rect x="60" y="3" width="4" height="2" fill="#e8c"/><rect x="70" y="6" width="5" height="3" fill="#fc6"/><rect x="4" y="11" width="5" height="3" fill="#fd8"/><rect x="10" y="25" width="6" height="3" fill="#fd8"/><rect x="20" y="30" width="6" height="3" fill="#f77"/><rect x="14" y="34" width="8" height="3" fill="#fc6"/><rect x="65" y="24" width="8" height="3" fill="#fd8"/><rect x="76" y="16" width="5" height="3" fill="#f9b"/></g><rect x="24" y="10" width="38" height="1.300" fill="#777"/><rect x="28" y="20" width="28" height="1" fill="#aaa"/>`,
  table: `<rect x="4" y="3" width="26" height="1.500" fill="#333"/><rect x="3" y="6" width="80" height=".6" fill="#888"/><rect x="74" y="8" width="8" height="3" fill="#f6a030"/><g fill="#aaa"><rect x="14" y="12" width="8" height="18" opacity=".6"/><rect x="30" y="12" width="8" height="18" opacity=".5"/><rect x="46" y="12" width="8" height="18" opacity=".5"/><rect x="62" y="12" width="8" height="18" opacity=".5"/></g><rect x="5" y="42" width="6" height="2" fill="#6b6"/><rect x="14" y="42" width="6" height="2" fill="#f84"/>`,
  arch: `<rect x="4" y="3" width="26" height="1.500" fill="#333"/><rect x="3" y="6" width="80" height=".6" fill="#888"/><rect x="17" y="8" width="52" height="5" fill="#f8b820"/><circle cx="24" cy="31" r="9" fill="none" stroke="#bbb"/><rect x="22" y="29" width="4" height="4" fill="#e88"/><rect x="46" y="17" width="36" height="20" fill="#ddd" stroke="#555"/><rect x="52" y="24" width="5" height="4" fill="#d44"/><rect x="46" y="41" width="36" height="3" fill="#f8a040"/>`,
  flow: `<rect x="4" y="2" width="20" height="1.500" fill="#333"/><rect x="3" y="6" width="80" height=".6" fill="#888"/><rect x="4" y="24" width="10" height="4" fill="#5596d6"/><rect x="24" y="19" width="14" height="14" fill="#5596d6"/><rect x="42" y="8" width="28" height="34" fill="#7cb050"/><g fill="#f8b820"><rect x="54" y="12" width="12" height="6"/><rect x="54" y="23" width="12" height="6"/><rect x="54" y="33" width="12" height="6"/></g><g fill="#5596d6"><rect x="44" y="14" width="8" height="3"/><rect x="44" y="25" width="8" height="3"/><rect x="44" y="35" width="8" height="3"/><rect x="73" y="24" width="10" height="4"/></g>`,
  pipe: `<rect x="4" y="2" width="20" height="1.500" fill="#333"/><rect x="3" y="6" width="80" height=".6" fill="#888"/><rect x="18" y="8" width="50" height="5" fill="#7cb050"/><g fill="#5596d6"><rect x="16" y="18" width="12" height="3"/><rect x="33" y="18" width="12" height="3"/><rect x="50" y="18" width="12" height="3"/><rect x="50" y="28" width="12" height="3"/><rect x="16" y="38" width="12" height="3"/><rect x="33" y="38" width="12" height="3"/><rect x="50" y="38" width="12" height="3"/></g><g fill="#f8b820"><rect x="66" y="18" width="14" height="3"/><rect x="66" y="28" width="14" height="3"/><rect x="66" y="38" width="14" height="3"/></g><circle cx="10" cy="19.500" r="2.500" fill="#f08030"/><circle cx="10" cy="39.500" r="2.500" fill="#f08030"/>`,
  matrix: `<rect x="4" y="2" width="26" height="1.500" fill="#333"/><rect x="3" y="6" width="80" height=".6" fill="#888"/><rect x="5" y="8" width="76" height="6" fill="#7cb050"/><g fill="#5f88b8"><rect x="6" y="16" width="24" height="10"/><rect x="33" y="16" width="20" height="10"/><rect x="56" y="16" width="24" height="10"/></g><g fill="#f8b820"><rect x="8" y="19" width="20" height="4"/><rect x="35" y="19" width="16" height="4"/><rect x="58" y="19" width="20" height="4"/></g><g><rect x="6" y="30" width="8" height="16" fill="#f8a020"/><rect x="22" y="32" width="14" height="12" fill="#5596d6"/><rect x="42" y="32" width="14" height="12" fill="#7cb050"/><rect x="64" y="30" width="14" height="14" fill="#3f71c8"/></g>`,
  mode: `<rect x="4" y="2" width="26" height="1.500" fill="#333"/><rect x="3" y="5.500" width="80" height=".6" fill="#888"/><rect x="6" y="7" width="74" height="5" rx=".6" fill="#6fa348"/><rect x="7" y="18" width="9" height="5" fill="#5596d6"/><rect x="7" y="26" width="9" height="5" fill="#f5822f"/><rect x="7" y="35" width="9" height="5" fill="#ffba00"/><rect x="21" y="17" width="12" height="7" fill="#ffba00"/><rect x="21" y="25" width="12" height="7" fill="#13c04a"/><rect x="21" y="33" width="12" height="7" fill="#3f71c8"/><rect x="33" y="18" width="21" height="6" fill="#ffe8d0"/><rect x="33" y="26" width="21" height="6" fill="#cdf0d8"/><rect x="33" y="34" width="21" height="6" fill="#d3d9ec"/><rect x="62" y="14" width="17" height="19" rx="3" fill="#ffba00"/><rect x="62" y="33" width="17" height="7" rx="1" fill="#5596d6"/><rect x="6" y="43" width="56" height="5" fill="#5596d6"/><rect x="60" y="43" width="20" height="5" fill="#ffba00"/>`
};

class WpsThumbs extends HTMLElement {
  constructor() {
    super();
    const list = [
      ['', 'cover'], ['2', 'list'], ['3', 'table', 1], ['4', 'arch', 1], ['5', 'flow', 1], ['6', 'pipe', 1],
      ['7', 'list'], ['8', 'matrix', 1], ['9', 'mode', 1, 1], ['10', 'list']
    ];
    const rows = list.map(([n, art, star, on]) => `
      <div class="th ${on ? 'on' : ''}">
        <div class="num"><span>${n}</span>${star ? '<em>★</em>' : ''}</div>
        <svg class="pic" viewBox="0 0 86 50" width="86" height="50">${THUMB_ART[art]}</svg>
      </div>`).join('');
    this.attachShadow({ mode: 'open' }).innerHTML = `
    <style>
      :host{display:block;position:relative;background:#f3f3f3;border-right:1px solid #e2e2e2;overflow:hidden;box-sizing:border-box}
      .top{height:45px;display:flex;align-items:center;padding-left:12px;color:#aaa;font-size:14px}
      .pill{margin-left:auto;margin-right:3px;width:43px;height:20px;border-radius:10px;background:#6e6e6e;color:#ddd;display:flex;align-items:center;justify-content:center}
      .ls{margin-left:36px;color:#666}
      .list{height:660px;overflow:hidden}
      .th{display:flex;margin-bottom:18.700px;padding-left:5px}
      .th:first-child{margin-top:-13px}
      .num{width:26px;font-size:13px;color:#777;display:flex;flex-direction:column;align-items:center;gap:17px;flex:none;padding-left:4px;padding-right:2px;box-sizing:border-box}
      .num em{font-style:normal;font-size:14px;color:#666;line-height:14px}
      .pic{background:#fff;outline:1px solid #c9c9c9;flex:none}
      .on .pic{outline:2px solid #f0703c}
      .on .num span{color:#e06a40}
      .bar{position:absolute;left:123px;top:59px;width:9px;height:462px;border-radius:5px;background:#b9b9b9}
      .add{display:block;width:44px;height:32px;border-radius:8px;background:#ececec;margin:6px 0 0 45px;text-align:center;font-size:24px;line-height:30px;color:#555}
    </style>
    <div class="top"><span>»</span><span class="ls">${ic('listview', 16)}</span><span class="pill">${ic('slideview', 15)}</span></div>
    <div class="list">${rows}</div>
    <span class="add">+</span>
    <div class="bar"></div>`;
  }
}

class SlideCanvas extends HTMLElement {
  constructor() {
    super();
    this.attachShadow({ mode: 'open' }).innerHTML = `
    <style>
      :host{display:block;position:relative;height:709px;background:linear-gradient(90deg,#f0f0f0,#f8f8f8);padding:22px 0 0 71px;box-sizing:border-box;overflow:hidden}
      .scroll{position:absolute;right:0;top:0;bottom:0;width:12px;background:#dcdce0}
      .thumb{position:absolute;top:402px;left:0;right:0;height:40px;background:#c4c4cc;border-radius:3px}
      .arr{position:absolute;left:3px;top:5px;border:3px solid transparent;border-bottom:5px solid #999;border-top:0}
    </style>
    <wps-slide></wps-slide>
    <div class="scroll"><i class="arr"></i><div class="thumb"></div></div>`;
  }
}

class SlideNode extends HTMLElement {
  constructor() {
    super();
    this.attachShadow({ mode: 'open' }).innerHTML = `
    <style>
      :host{position:absolute;left:var(--x);top:var(--y);width:var(--w);height:var(--h);box-sizing:border-box;
        display:flex;align-items:center;justify-content:center;background:var(--bg,none);border-radius:var(--r,0);
        color:var(--c,#fff);font-size:var(--f,22px);text-align:center;line-height:1.200}
    </style><slot></slot>`;
  }
}

class WpsSlide extends HTMLElement {
  constructor() {
    super();
    const n = (x, y, w, h, bg, r, extra, inner) =>
      `<slide-node style="--x:${x}px;--y:${y}px;--w:${w}px;--h:${h}px;--bg:${bg};--r:${typeof r === 'number' ? r + 'px' : r};${extra}">${inner}</slide-node>`;
    const dep = (y, h, bg) => n(246, y, 160, h, bg, 14, '--f:58px;font-weight:300', '依赖');
    const app = (y, h, bg, name) => n(406, y, 288, h, bg, '0 10px 10px 0', '--c:#111;--f:25px;justify-content:flex-start',
      `<div class="lines"><div>${name}应用</div><div>业务逻辑</div></div>`);
    const pull = (x, y, a) => n(x - 26, y - 15, 52, 30, 'none', 0, `--c:#111;--f:22px;transform:rotate(${a}deg)`, '拉取');
    this.attachShadow({ mode: 'open' }).innerHTML = `
    <style>
      :host{display:block;position:relative;width:1186px;height:668px;background:#fff;box-shadow:0 0 3px 1px #bcbcbc}
      h1{position:absolute;left:28px;top:18px;margin:0;font-size:30.500px;font-weight:500;color:#222;line-height:48px}
      .hr{position:absolute;left:15px;top:69px;width:1158px;height:1px;background:#ccc}
      .dash{position:absolute;left:225px;top:194px;width:196px;height:352px;box-sizing:border-box;border:1.500px dashed #4a6488;border-radius:44px;z-index:2}
      .lines{text-align:left;line-height:35px;padding-left:30px;position:relative}
      .lines div{position:relative}
      .lines div::before{content:"";position:absolute;left:-15px;top:16px;width:3px;height:3px;border-radius:50%;background:#222}
      svg.arrows{position:absolute;left:0;top:0;pointer-events:none}
      .caretI{position:absolute;left:976px;top:598px}
    </style>
    <h1>DMS Qiankun项目开发模式</h1>
    <div class="hr"></div>
    ${n(85, 89, 1011, 64, '#6fa348', 10, '--c:#dfeccd;box-shadow:inset 0 0 0 1px #5f8f3c', '前端团队微服务开发模式')}
    ${n(87, 228, 121, 70, '#5596d6', 12, 'border:1px solid #41719c;--c:#e4f0fa', 'A团队')}
    ${n(87, 335, 121, 70, '#f5822f', 12, 'border:1px solid #b9611f;--c:#fde2cc', 'B团队')}
    ${n(87, 449, 121, 70, '#ffba00', 12, 'border:1px solid #c79000;--c:#fff2c0', 'C团队')}
    ${app(222, 82, '#ffe8d0', 'A')}
    ${app(329, 83, '#cdf0d8', 'B')}
    ${app(435, 83, '#d3d9ec', 'C')}
    ${dep(213, 100, '#ffba00')}
    ${dep(320, 101, '#13c04a')}
    ${dep(427, 100, '#3f71c8')}
    <div class="dash"></div>
    <svg class="arrows" width="1186" height="668" viewBox="0 0 1186 668">
      <defs><marker id="h" markerUnits="userSpaceOnUse" markerWidth="16" markerHeight="14" refX="12" refY="7" orient="auto"><path d="M0 1 13 7 0 13z" fill="#6fa348"/></marker></defs>
      <g stroke="#6fa348" stroke-width="4.500" fill="none">
        <path d="M694 263 862 314" marker-end="url(#h)"/>
        <path d="M694 370 862 367" marker-end="url(#h)"/>
        <path d="M694 475 862 418" marker-end="url(#h)"/>
      </g>
    </svg>
    ${pull(780, 263, 15)}
    ${pull(781, 351, 0)}
    ${pull(781, 429, -18)}
    ${n(863, 200, 235, 300, '#ffba00', '50px 50px 0 0', '--c:#fff2c0;align-items:flex-start;padding-top:141px;line-height:26px', '（A+B+C）应用<br>业务逻辑')}
    ${n(863, 455, 235, 80, '#5596d6', 18, '--c:#e8f2fb', '依赖')}
    ${n(85, 586, 757, 64, '#5596d6', 8, '--c:#e4f0fa;padding-right:280px', '开发时')}
    ${n(834, 586, 271, 64, '#ffba00', 8, '--c:#fff2c0', '构建时')}
    <svg class="caretI" width="10" height="18" viewBox="0 0 10 18" fill="none" stroke="#222" stroke-width="1.500"><path d="M1 1h8M5 1v16M1 17h8"/></svg>`;
  }
}

class WpsStatus extends HTMLElement {
  constructor() {
    super();
    const t = (cx, s, w) => [cx, w || s.length * 14, s];
    const g = 'color:#666';
    this.attachShadow({ mode: 'open' }).innerHTML = `
    <style>
      :host{display:block;height:28px;background:#ececec;border-top:1px solid #ddd;box-sizing:border-box;font-size:13.500px;line-height:14px;color:#555}
      ${ROW_CSS}
      .row{height:100%}
      .play{width:33px;height:26px;background:#ef7035;display:flex;align-items:center;justify-content:center;color:#fff;font-size:16px}
      .sl{display:block;width:122px;height:3px;background:#555;position:relative}
      .sl::after{content:"";position:absolute;left:58px;top:-5px;width:12px;height:12px;border-radius:50%;background:#bbb;border:1px solid #555;box-sizing:border-box}
    </style>
    <div class="row">${row(241, [
      [295, 80, '幻灯片 9 / 14'],
      [384, 40, 'TCCN'],
      [435, 18, ic('shield', 18, g)],
      t(488, '文档未保护', 66),
      [542, 15, ic('backup', 15)],
      t(592, '本地备份开', 68),
      t(1000, '智能美化', 56),
      [1050, 16, ic('note', 16, g)],
      t(1075, '备注', 30),
      [1122, 16, ic('comment', 16, g)],
      t(1148, '批注', 30),
      [1194, 18, ic('view1', 18, g)], [1222, 18, ic('view2', 18, g)], [1250, 18, ic('view3', 18, g)],
      [1290, 18, ic('lock', 18, g)],
      [1331, 33, '<span class="play">▶</span>'],
      [1385, 18, ic('focus', 18, g)],
      t(1435, '116%', 40),
      [1476, 8, '▾'],
      [1497, 12, '−'],
      [1586, 122, '<i class="sl"></i>'],
      [1678, 12, '+']
    ])}</div>`;
  }
}

class PlayerControls extends HTMLElement {
  constructor() {
    super();
    const w = (cx, name, size = 20, st = '') => [cx, size, ic(name, size, st)];
    this.attachShadow({ mode: 'open' }).innerHTML = `
    <style>
      :host{position:absolute;left:0;right:0;bottom:0;height:117px;display:block;color:#fff;
        background:linear-gradient(180deg,rgba(20,20,20,.72) 0,rgba(20,20,20,.72) 76px,#161616 77px)}
      ${ROW_CSS}
      .prog{display:grid;grid-template-columns:77px 1fr 77px;height:34px;align-items:center;font-size:12px}
      .prog span{padding-left:16px}
      .prog span:last-child{padding-left:23px}
      .track{position:relative;height:4px;border-radius:2px;background:#b0b0b0;display:block}
      .done{display:block;height:100%;width:325px;background:#ff8030;border-radius:2px}
      .knob{position:absolute;left:314px;top:-9px;width:22px;height:22px;border-radius:50%;background:#3d3d3d;box-sizing:border-box;border:6px solid #3d3d3d}
      .knob::after{content:"";display:block;width:10px;height:10px;border-radius:50%;background:#ff8030}
      .main{height:81px}
      .name{font-size:20px;font-weight:700}
      .num{position:absolute;font-size:9px;font-style:normal;left:50%;transform:translateX(-50%);top:12px}
      .sk{position:relative;display:block;height:22px;width:22px}
      .play{width:52px;height:52px;border-radius:50%;box-sizing:border-box;padding:3.500px;background:conic-gradient(from 0deg,#ef7c34,#ef6a4a 25%,#c83f98 50%,#8f3ab0 70%,#ef7c34);display:flex}
      .play b{flex:1;background:#161616;border-radius:50%;display:flex;align-items:center;justify-content:center;gap:5px}
      .play i{width:7px;height:22px;background:#fff;border-radius:2px}
      .wm{position:absolute;left:1631px;top:20px;color:#838383;font-size:20.500px;line-height:26px;white-space:nowrap}
      .wm small{display:block;font-size:14.500px;line-height:18px}
    </style>
    <div class="prog"><span>0:11:07</span>
      <i class="track"><i class="done"></i><i class="knob"></i></i>
      <span>0:50:14</span></div>
    <div class="row main">${row(0, [
      [106, 180, '<span class="name">4.DMS前端框架培训</span>'],
      w(820, 'shuffle', 18),
      w(864, 'prev', 18),
      [909, 22, `<span class="sk">${ic('back', 14, 'margin-left:4px')}<i class="num">10</i></span>`],
      [959, 52, '<span class="play"><b><i></i><i></i></b></span>'],
      [1010, 22, `<span class="sk">${ic('fwd', 14, 'margin-left:4px')}<i class="num">30</i></span>`],
      w(1053, 'next', 18, 'opacity:.55'),
      w(1098, 'repeat', 18),
      w(1722, 'subtitle', 19),
      w(1766, 'volume', 19),
      w(1810, 'full', 17),
      w(1854, 'pip', 17),
      w(1898, 'more', 18)
    ])}</div>
    <div class="wm">激活 Windows<small>转到“设置”以激活 Windows。</small></div>`;
  }
}

class SpeedWidget extends HTMLElement {
  constructor() {
    super();
    this.attachShadow({ mode: 'open' }).innerHTML = `
    <style>
      :host{position:absolute;left:1724px;top:585px;width:122px;height:62px;display:block;z-index:3}
      .body{position:absolute;left:26px;top:7px;width:91px;height:46px;border-radius:0 22px 22px 0;background:#2a3138;color:#cdd;font-size:11px;line-height:22px;text-align:right;padding-right:8px;box-sizing:border-box;letter-spacing:1px}
      .dial{position:absolute;left:0;top:0;width:58px;height:58px;border-radius:50%;background:linear-gradient(180deg,#25333f 0,#25333f 63%,#0f5570 64%);border:2px solid #1d2c36;box-sizing:border-box;border-top-color:#2ac4d8;border-right-color:#2ac4d8;color:#fff;font-size:27px;display:flex;align-items:center;justify-content:center}
      .dial small{font-size:11px;margin-top:8px}
      .ai{position:absolute;left:59px;top:-19px;font:700 23px "Liberation Sans",sans-serif;background:linear-gradient(90deg,#4fe0a0,#50d0f0);-webkit-background-clip:text;background-clip:text;color:transparent}
      .u,.d{position:absolute;left:66px;width:10px;text-align:center;font-size:14px;line-height:14px;font-weight:700}
      .u{top:11px;color:#2aa8f0}.d{top:33px;color:#f09020}
    </style>
    <div class="body">0 K/s<br>0 K/s</div>
    <span class="u">↑</span><span class="d">↓</span>
    <div class="dial">30<small>%</small></div>
    <span class="ai">AI</span>`;
  }
}

class WinTaskbar extends HTMLElement {
  constructor() {
    super();
    const task = (name, cls = '') => `<div class="task ${cls}">${ic(name, 28)}</div>`;
    this.attachShadow({ mode: 'open' }).innerHTML = `
    <style>
      :host{display:flex;position:relative;height:40px;background:linear-gradient(90deg,#3e3440 0,#4c3e3e 25%,#4a4640 60%,#41423c 100%);color:#fff;font-size:13px}
      ${ROW_CSS}
      .start{width:48px;background:#2f3a52;display:flex;align-items:center;justify-content:center}
      .search{width:288px;background:#f3f3f3;color:#222;display:flex;align-items:center;gap:8px;padding-left:12px;box-sizing:border-box;font-size:14px}
      .tv{width:49px;display:flex;align-items:center;justify-content:center}
      .task{width:49.200px;display:flex;align-items:center;justify-content:center;box-sizing:border-box;border-bottom:3px solid transparent}
      .run{border-bottom-color:#6ab0e8;border-left:1px solid transparent;border-right:1px solid transparent;background-clip:padding-box}
      .hot{background:#a9622f;border-bottom-color:#ff7a1a}
      .cur{background:#6a6a6a;border-bottom-color:#6ab0e8}
      .clock{display:flex;flex-direction:column;align-items:center;line-height:20px;font-size:13px}
      .clock span:first-child{font-size:14px}
      .csdn{position:absolute;left:1803px;top:12px;font-size:14px;color:rgba(210,210,210,.55);white-space:nowrap}
      .nb{position:absolute;left:1886px;top:17px;width:18px;height:18px;border-radius:50%;border:1px solid #aaa;box-sizing:border-box;background:rgba(30,30,30,.75);font:700 11px/16px "Liberation Sans",sans-serif;text-align:center}
    </style>
    <div class="start">${ic('win', 26)}</div>
    <div class="search">${ic('tasksearch', 22, 'color:#333')}搜索</div>
    <div class="tv">${ic('taskview', 22)}</div>
    ${task('edge')}${task('folder', 'hot')}${task('store')}${task('mail')}
    ${task('chrome', 'run')}${task('vscode', 'run')}${task('wechat', 'run')}${task('rar', 'run')}${task('logo', 'cur')}
    <div class="row">${row(827.800, [
      [1646, 24, ic('news', 24)],
      [1688, 14, ic('caret', 14)],
      [1712, 20, ic('cloud', 20)],
      [1735, 18, ic('speaker', 18)],
      [1760, 18, ic('net', 18)],
      [1782, 18, '<span style="font-size:18px">英</span>'],
      [1830, 60, '<span class="clock"><span>14:49</span><span>2023/9/7</span></span>'],
      [1887, 20, ic('notify', 20)]
    ])}</div>
    <div class="csdn">CSDN @筱明凶</div>
    <div class="nb">6</div>`;
  }
}

customElements.define('media-player', MediaPlayer);
customElements.define('player-titlebar', PlayerTitlebar);
customElements.define('mac-desktop', MacDesktop);
customElements.define('mac-menubar', MacMenubar);
customElements.define('mac-dock', MacDock);
customElements.define('wps-window', WpsWindow);
customElements.define('wps-tabs', WpsTabs);
customElements.define('wps-menu', WpsMenu);
customElements.define('wps-ribbon', WpsRibbon);
customElements.define('wps-thumbs', WpsThumbs);
customElements.define('slide-canvas', SlideCanvas);
customElements.define('slide-node', SlideNode);
customElements.define('wps-slide', WpsSlide);
customElements.define('wps-status', WpsStatus);
customElements.define('player-controls', PlayerControls);
customElements.define('speed-widget', SpeedWidget);
customElements.define('win-taskbar', WinTaskbar);
</script>
</body>
</html>
